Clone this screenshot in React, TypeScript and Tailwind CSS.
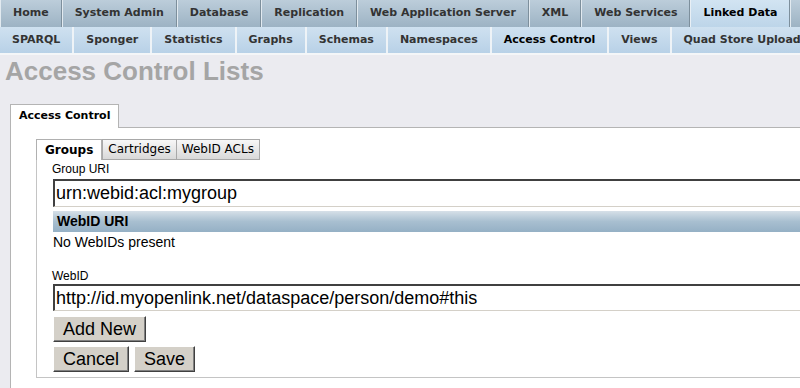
import React from "react";

const topTabs = [
  { label: "Home" },
  { label: "System Admin" },
  { label: "Database" },
  { label: "Replication" },
  { label: "Web Application Server" },
  { label: "XML" },
  { label: "Web Services" },
  { label: "Linked Data", active: true },
];

const subTabs = [
  { label: "SPARQL" },
  { label: "Sponger" },
  { label: "Statistics" },
  { label: "Graphs" },
  { label: "Schemas" },
  { label: "Namespaces" },
  { label: "Access Control", active: true },
  { label: "Views" },
  { label: "Quad Store Upload" },
];

function Button({ children }: { children: React.ReactNode }) {
  return (
    <button
      type="button"
      className="h-[26px] px-[9px] bg-[#d4d0c8] text-black text-[18px] leading-[22px] border border-t-white border-l-white border-r-[#404040] border-b-[#404040] shadow-[inset_-1px_-1px_0_#808080]"
    >
      {children}
    </button>
  );
}

export default function App() {
  return (
    <div className="w-[800px] h-[388px] overflow-hidden bg-[#ebebf0] font-['Liberation_Sans',Arial,sans-serif] text-black">
      {/* main menu */}
      <div className="flex h-[27px] whitespace-nowrap font-['DejaVu_Sans',Verdana,sans-serif] text-[11px] font-bold">
        {topTabs.map((t) => (
          <div
            key={t.label}
            className={
              t.active
                ? "flex items-center px-3 shrink-0 border-l border-l-[#e8eff5] border-r border-r-[#7d8f9c] bg-gradient-to-b from-[#d2e4f2] to-[#bdd5e9] text-black"
                : "flex items-center px-3 shrink-0 border-l border-l-[#e2eaf0] border-r border-r-[#7d8f9c] bg-gradient-to-b from-[#bccdda] to-[#9db3c4] text-[#333]"
            }
          >
            {t.label}
          </div>
        ))}
        <div className="w-[40px] shrink-0 border-l border-l-[#e2eaf0] bg-gradient-to-b from-[#bccdda] to-[#9db3c4]" />
      </div>
      <div className="flex h-[28px] whitespace-nowrap font-['DejaVu_Sans',Verdana,sans-serif] text-[11px] font-bold border-b-2 border-b-[#f4f6f8]">
        {subTabs.map((t) => (
          <div
            key={t.label}
            className={
              "flex items-center px-3 shrink-0 border-r-2 border-r-[#eef3f7] bg-gradient-to-b from-[#cfe1f0] to-[#b8d1e7] " +
              (t.active ? "text-black" : "text-[#333]")
            }
          >
            {t.label}
          </div>
        ))}
      </div>

      <h1 className="mt-[1px] pl-[5px] text-[26px] leading-[30px] font-bold text-[#a5a5a5]">
        Access Control Lists
      </h1>

      {/* outer tab */}
      <div className="mt-[16px] ml-[10px]">
        <div className="relative z-10 -mb-px inline-flex h-[24px] items-center px-[8px] bg-white border border-b-0 border-[#b4b4b4] font-['DejaVu_Sans',Verdana,sans-serif] text-[11px] font-bold">
          Access Control
        </div>
        <div className="w-[820px] bg-white border-l border-t border-[#b4b4b4] pl-[25px] pt-[11px] pb-[20px]">
          {/* inner tabs */}
          <div className="flex h-[21px] font-['DejaVu_Sans',Verdana,sans-serif] text-[12px]">
            <div className="flex items-center pl-[8px] pr-[8px] bg-white border border-b-0 border-[#b0b0b0] font-bold">
              Groups
            </div>
            <div className="flex items-center px-[5px] bg-gradient-to-b from-[#f7f7f7] to-[#d9d9d9] border border-[#a8a8a8]">
              Cartridges
            </div>
            <div className="flex items-center px-[5px] bg-gradient-to-b from-[#f7f7f7] to-[#d9d9d9] border border-l-0 border-[#a8a8a8]">
              WebID ACLs
            </div>
          </div>

          <div className="border-l border-b border-[#c4c4c4] pl-[15px] pt-[2px] pb-[5px]">
            <div className="text-[12px] leading-[14px]">Group URI</div>
            <div className="mt-[3px] ml-px h-[28px] flex items-center pl-[1px] border-t-2 border-l-2 border-t-[#404040] border-l-[#404040] border-b border-b-[#d4d0c8] text-[18px] leading-[22px] whitespace-nowrap">
              urn:webid:acl:mygroup
            </div>

            <div className="mt-[4px] ml-px h-[21px] flex items-center pl-[4px] bg-gradient-to-b from-[#d6e0e8] via-[#a8bfd0] to-[#95b0c5] text-[14px] font-bold leading-[21px]">
              WebID URI
            </div>
            <div className="mt-[2px] ml-px text-[14px] leading-[16px]">No WebIDs present</div>

            <div className="mt-[19px] text-[12px] leading-[14px]">WebID</div>
            <div className="mt-[1px] ml-px h-[27px] flex items-center pl-[1px] border-t-2 border-l-2 border-t-[#404040] border-l-[#404040] border-b border-b-[#d4d0c8] text-[18px] leading-[22px] whitespace-nowrap">
              http://id.myopenlink.net/dataspace/person/demo#this
            </div>

            <div className="mt-[5px] ml-px flex">
              <Button>Add New</Button>
            </div>
            <div className="mt-[4px] ml-px flex gap-[5px]">
              <Button>Cancel</Button>
              <Button>Save</Button>
            </div>
          </div>
        </div>
      </div>
    </div>
  );
}
